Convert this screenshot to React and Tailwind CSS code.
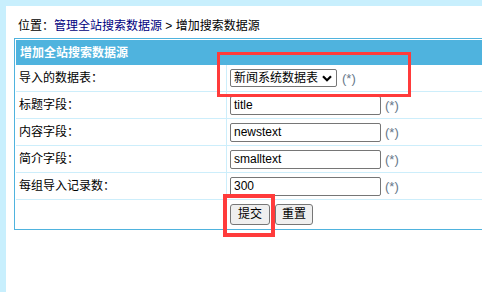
export default function App() {
  const rows = [
    { label: "标题字段：", value: "title" },
    { label: "内容字段：", value: "newstext" },
    { label: "简介字段：", value: "smalltext" },
    { label: "每组导入记录数：", value: "300" },
  ];
  return (
    <div className="relative w-[482px] h-[292px] overflow-hidden bg-[#c8effd] pt-[6px] pl-[6px] font-['Liberation_Sans','Noto_Sans_CJK_SC',sans-serif] text-[12px] text-black">
      <div className="h-full bg-white overflow-hidden">
        <div className="pl-[12px] pt-[12px] h-[32px] leading-[16px] whitespace-nowrap">
          位置：<span className="text-[#000080]">管理全站搜索数据源</span> &gt; 增加搜索数据源
        </div>
        <div className="ml-[8px] w-[700px] border border-[#4fb3de] p-px bg-white">
          <div className="h-[25px] bg-[#4fb3de] text-white font-bold flex items-center pl-[4px] leading-none">
            增加全站搜索数据源
          </div>
          <div className="flex h-[27px] border-b border-[#cdeefb]">
            <div className="w-[211px] shrink-0 border-r border-[#cdeefb] pl-[3px] flex items-center">
              导入的数据表：
            </div>
            <div className="flex items-center pl-[3px]">
              <div className="relative w-[107px] h-[18px] border border-[#767676] rounded-[2px] bg-white flex items-center pl-[3px] leading-none">
                新闻系统数据表
                <svg className="absolute right-[4px] top-[5px]" width="10" height="7" viewBox="0 0 10 7">
                  <path d="M1 1.2 L5 5.2 L9 1.2" fill="none" stroke="#000" strokeWidth="2.2" />
                </svg>
              </div>
              <span className="ml-[5px] text-[13px] leading-none text-[#66778a]">(*)</span>
            </div>
          </div>
          {rows.map((r) => (
            <div key={r.label} className="flex h-[27px] border-b border-[#cdeefb]">
              <div className="w-[211px] shrink-0 border-r border-[#cdeefb] pl-[3px] flex items-center">
                {r.label}
              </div>
              <div className="flex items-center pl-[3px]">
                <div className="w-[151px] h-[19px] border border-[#767676] rounded-[2px] bg-white flex items-center pl-[3px] leading-none">
                  {r.value}
                </div>
                <span className="ml-[4px] text-[13px] leading-none text-[#66778a]">(*)</span>
              </div>
            </div>
          ))}
          <div className="flex h-[28px]">
            <div className="w-[211px] shrink-0 border-r border-[#cdeefb]"></div>
            <div className="flex items-center pl-[3px] gap-[5px]">
              <button className="w-[40px] h-[21px] border border-[#767676] rounded-[3px] bg-[#efefef] flex items-center justify-center leading-none text-[12px]">
                提交
              </button>
              <button className="w-[38px] h-[21px] border border-[#767676] rounded-[3px] bg-[#efefef] flex items-center justify-center leading-none text-[12px]">
                重置
              </button>
            </div>
          </div>
        </div>
      </div>
      <div className="absolute left-[217px] top-[52px] w-[194px] h-[45px] border-[3px] border-[#ff3b3b]"></div>
      <div className="absolute left-[223px] top-[194px] w-[52px] h-[43px] border-[4px] border-[#ff3b3b]"></div>
    </div>
  );
}
